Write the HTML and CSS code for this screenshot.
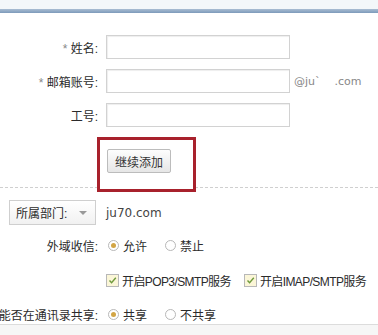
FILE: index.html
```html
<!DOCTYPE html>
<html>
<head>
  <title>添加成员</title>
  <link rel="stylesheet" href="styles.css">
</head>
<body>

<div class="topbar"></div>
<div class="blueline"></div>

<div class="form">
  <div class="row">
    <label class="label"><span><span class="req">*</span> 姓名:</span></label>
    <input class="text" type="text">
  </div>
  <div class="row">
    <label class="label"><span><span class="req">*</span> 邮箱账号:</span></label>
    <input class="text" type="text">
    <span class="domain">@ju`&nbsp;&nbsp;&nbsp;&nbsp;.com</span>
  </div>
  <div class="row">
    <label class="label"><span>工号:</span></label>
    <input class="text" type="text">
  </div>

  <div class="add-row">
    <div class="highlight">
      <button class="btn">继续添加</button>
    </div>
  </div>
</div>

<div class="sep"></div>

<div class="dept-row">
  <div class="select">所属部门: <span class="arrow"></span></div>
  <span class="dept">ju70.com</span>
</div>

<div class="opt-row">
  <span class="label"><span>外域收信:</span></span>
  <span class="radio on"></span><span class="opt">允许</span>
  <span class="radio"></span><span class="opt">禁止</span>
</div>

<div class="opt-row">
  <span class="label"></span>
  <span class="check"><svg width="9" height="9" viewBox="0 0 9 9"><path d="M1.5 4.5 L3.6 6.8 L7.8 1.8" fill="none" stroke="#6f9a3c" stroke-width="1.4"/></svg></span><span class="opt tight">开启POP3/SMTP服务</span>
  <span class="check"><svg width="9" height="9" viewBox="0 0 9 9"><path d="M1.5 4.5 L3.6 6.8 L7.8 1.8" fill="none" stroke="#6f9a3c" stroke-width="1.4"/></svg></span><span class="opt tight">开启IMAP/SMTP服务</span>
</div>

<div class="opt-row share">
  <span class="label"><span>能否在通讯录共享:</span></span>
  <span class="radio on"></span><span class="opt">共享</span>
  <span class="radio"></span><span class="opt">不共享</span>
</div>

<div class="footer"></div>

</body>
</html>
```

FILE: styles.css
```css
html, body {
  margin: 0;
  padding: 0;
  background: white;
  color: #2b2b2b;
  font-family: "Liberation Sans", "Noto Sans CJK SC", sans-serif;
  font-size: 12px;
  overflow: hidden;
}

.topbar {
  height: 9px;
  background: #f3f7fa;
}

.blueline {
  height: 4px;
  background: linear-gradient(#a9bdd3, #7d9aba);
}

.form {
  padding-top: 22px;
}

.row {
  display: flex;
  align-items: center;
  height: 24px;
  margin-bottom: 10px;
}

.label {
  width: 98px;
  flex: none;
  display: flex;
  justify-content: flex-end;
  white-space: nowrap;
  margin-right: 8px;
}

.req {
  color: #888;
}

.text {
  width: 184px;
  height: 24px;
  box-sizing: border-box;
  border: 1px solid #d2d2d2;
  box-shadow: inset 1px 1px 1px #eee;
  padding: 0 4px;
  margin: 0;
  outline: none;
}

.domain {
  margin-left: 4px;
  color: #888;
  font-family: "DejaVu Sans", sans-serif;
  font-size: 11px;
}

.add-row {
  padding-left: 97px;
}

.add-row .highlight {
  position: relative;
  z-index: 1;
  width: 99px;
  height: 55px;
  box-sizing: border-box;
  border: 3px solid #a8212c;
  background: white;
  padding: 9px 0 0 7px;
  margin-bottom: -5px;
}

.btn {
  width: 64px;
  height: 24px;
  border: 1px solid #bcbcbc;
  border-radius: 2px;
  background: linear-gradient(#fdfdfd, #e6e6e6);
  color: #333;
  font-family: "Noto Sans CJK SC", sans-serif;
  font-size: 12px;
  padding: 0;
}

.sep {
  border-top: 1px dashed #cfcfcf;
}

.dept-row {
  display: flex;
  align-items: center;
  margin-top: 12px;
  padding-left: 9px;
  height: 25px;
}

.select {
  width: 87px;
  height: 25px;
  box-sizing: border-box;
  border: 1px solid #cfcfcf;
  background: linear-gradient(#ffffff, #f1f1f1);
  display: flex;
  align-items: center;
  padding-left: 6px;
  margin-right: 10px;
}

.arrow {
  width: 0;
  height: 0;
  margin-left: 12px;
  border-left: 4px solid transparent;
  border-right: 4px solid transparent;
  border-top: 4px solid #999;
}

.dept {
  font-family: "DejaVu Sans", sans-serif;
  font-size: 12px;
  color: #444;
}

.opt-row {
  display: flex;
  align-items: center;
  height: 20px;
  margin-top: 10px;
}

.opt-row + .opt-row {
  margin-top: 15px;
}

.opt-row.share {
  margin-top: 16px;
  height: 17px;
}

.radio {
  width: 9px;
  height: 9px;
  flex: none;
  border: 1px solid #b8b8b8;
  border-radius: 50%;
  background: white;
  position: relative;
  margin-left: 2px;
}

.radio.on::after {
  content: "";
  position: absolute;
  left: 2px;
  top: 2px;
  width: 5px;
  height: 5px;
  border-radius: 50%;
  background: #d2a545;
}

.check {
  width: 11px;
  height: 11px;
  flex: none;
  border: 1px solid #b8b8b8;
  background: #fbf6d8;
  display: flex;
  align-items: center;
  justify-content: center;
}

.opt {
  margin-left: 4px;
  margin-right: 16px;
  white-space: nowrap;
}

.opt.tight {
  letter-spacing: -0.6px;
  margin-left: 3px;
  margin-right: 13px;
}

.footer {
  border-top: 1px solid #dcdcdc;
  background: #f6f6f6;
  height: 14px;
  margin-top: 1px;
}
```
